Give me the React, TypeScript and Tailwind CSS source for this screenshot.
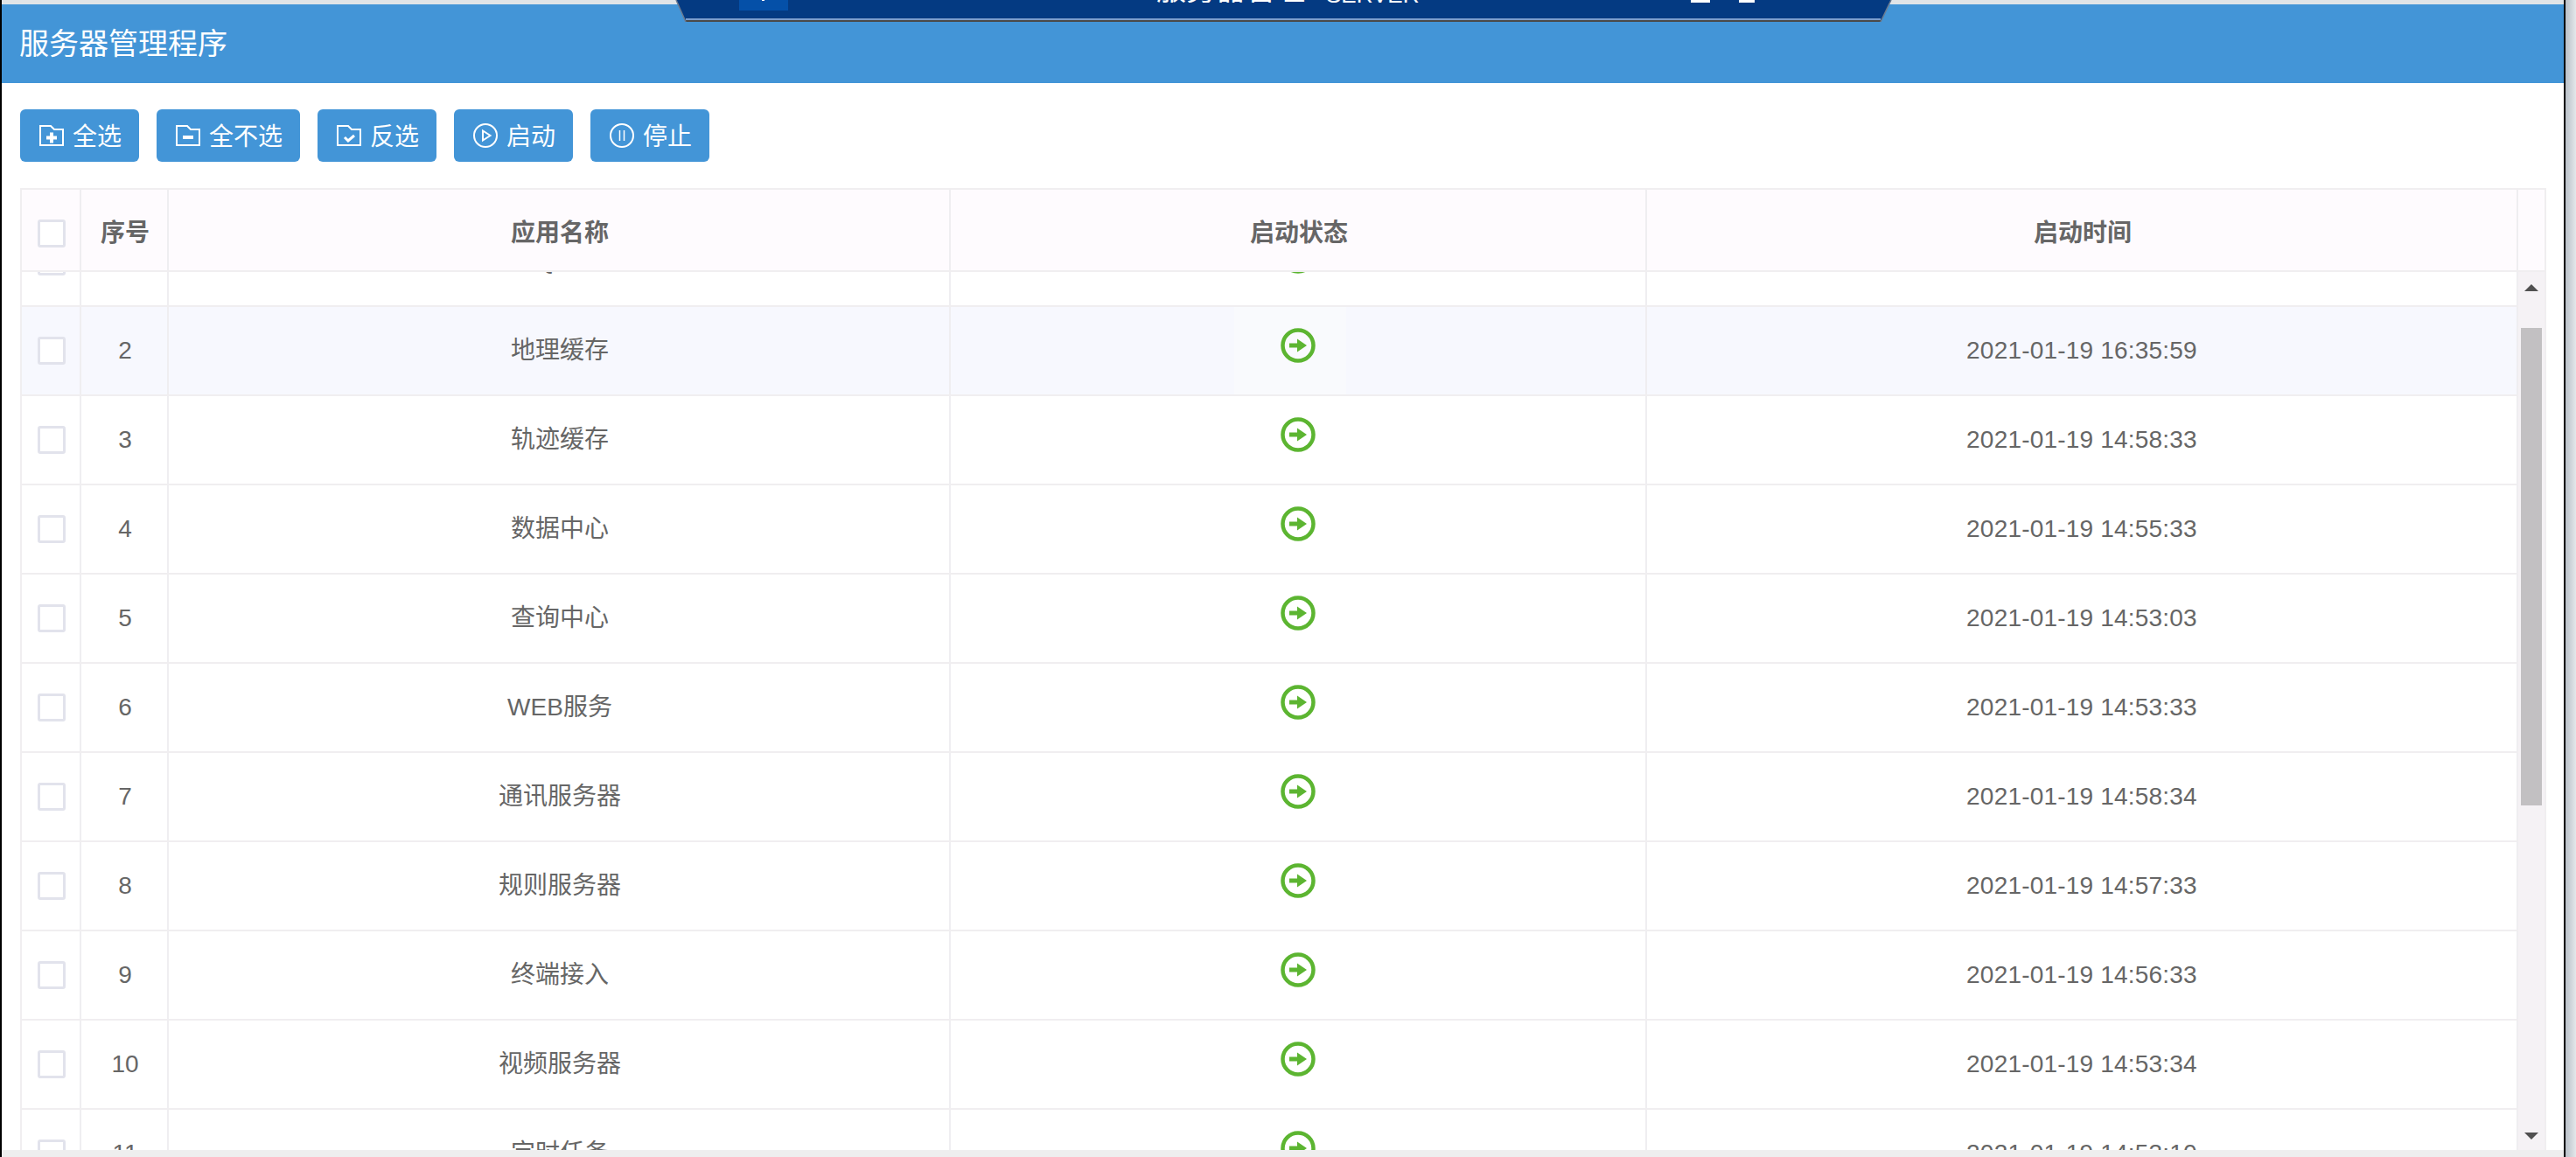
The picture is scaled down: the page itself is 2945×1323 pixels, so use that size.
import React from "react";

const FONT = "font-['Liberation_Sans','Noto_Sans_CJK_SC',sans-serif]";

const rows: [number, string, string][] = [
  [1, "MQ服务", "2021-01-19 14:58:33"],
  [2, "地理缓存", "2021-01-19 16:35:59"],
  [3, "轨迹缓存", "2021-01-19 14:58:33"],
  [4, "数据中心", "2021-01-19 14:55:33"],
  [5, "查询中心", "2021-01-19 14:53:03"],
  [6, "WEB服务", "2021-01-19 14:53:33"],
  [7, "通讯服务器", "2021-01-19 14:58:34"],
  [8, "规则服务器", "2021-01-19 14:57:33"],
  [9, "终端接入", "2021-01-19 14:56:33"],
  [10, "视频服务器", "2021-01-19 14:53:34"],
  [11, "定时任务", "2021-01-19 14:53:10"],
];

function Folder({ kind }: { kind: "plus" | "minus" | "check" }) {
  return (
    <svg width="28" height="24" viewBox="0 0 28 24" fill="none" className="shrink-0">
      <path d="M1 23V1H13L17 5H27V23Z" stroke="white" strokeWidth="2" />
      {kind === "plus" && <path d="M8 14.5H20M14 8.5V20.5" stroke="white" strokeWidth="4" />}
      {kind === "minus" && <path d="M8 14H20" stroke="white" strokeWidth="4" />}
      {kind === "check" && <path d="M9 14L13 18L20 12" stroke="white" strokeWidth="3" />}
    </svg>
  );
}

function Circle({ kind }: { kind: "play" | "pause" }) {
  return (
    <svg width="28" height="28" viewBox="0 0 28 28" fill="none" className="shrink-0">
      <circle cx="14" cy="14" r="13" stroke="white" strokeWidth="2" />
      {kind === "play" && <path d="M11 8.5V19.5L19.5 14Z" stroke="white" strokeWidth="2" />}
      {kind === "pause" && <path d="M11.5 8V20M16.5 8V20" stroke="white" strokeWidth="1.5" />}
    </svg>
  );
}

function Btn({ icon, label, w }: { icon: React.ReactNode; label: string; w: string }) {
  return (
    <button className={`flex h-[60px] items-center justify-start gap-[10px] rounded-md bg-[#4395d7] pl-[22px] text-[28px] leading-none text-white ${w}`}>
      {icon}
      <span className="mt-[3px]">{label}</span>
    </button>
  );
}

function Check() {
  return <span className="ml-[2px] block h-8 w-8 rounded-[3px] border-[3px] border-[#e2e3ec] bg-white" />;
}

function Status() {
  return (
    <svg width="40" height="40" viewBox="0 0 40 40" fill="none" className="mb-3 ml-[18px]">
      <circle cx="20" cy="20" r="17.5" stroke="#5cb531" strokeWidth="4.5" />
      <path d="M10 20H21" stroke="#5cb531" strokeWidth="5" />
      <path d="M19 12.5L30 20L19 27.5Z" fill="#5cb531" />
    </svg>
  );
}

function Row({ n, name, time }: { n: number; name: string; time: string }) {
  const hover = n === 2;
  return (
    <div className={`flex h-[102px] shrink-0 border-b-2 border-[#f0eef0] text-[28px] text-[#666] ${hover ? "bg-[#f7f8fe]" : "bg-white"}`}>
      <div className="flex w-[68px] items-center justify-center border-r-2 border-[#efeef1]">
        <Check />
      </div>
      <div className="flex w-[100px] items-center justify-center border-r-2 border-[#efeef1] pl-[2px]">{n}</div>
      <div className="flex w-[894px] items-center justify-center border-r-2 border-[#efeef1] pl-[2px]">{name}</div>
      <div className="flex w-[796px] items-center justify-center border-r-2 border-[#efeef1]">
        <div className={`mr-[18px] flex h-full w-[128px] items-center justify-center ${hover ? "bg-[#f9fafd]" : ""}`}>
          <Status />
        </div>
      </div>
      <div className="flex w-[996px] items-center justify-center border-r-2 border-[#efeef1] tracking-[0.2px]">{time}</div>
    </div>
  );
}

function Tab() {
  return (
    <div className="absolute left-[770px] top-0 h-[26px] w-[1396px] overflow-hidden">
      <svg width="1396" height="26" viewBox="0 0 1396 26" className="absolute left-0 top-0">
        <polygon points="3,0 1392,0 1380,25 14,25" fill="#043a82" />
        <rect x="14" y="21" width="1366" height="2" fill="#7c9ccb" />
        <rect x="14" y="23" width="1366" height="2" fill="#4a4a4a" />
        <path d="M3 0L14 25M1392 0L1380 25" stroke="#6b7a90" strokeWidth="1.5" />
        <rect x="75" y="0" width="56" height="12" fill="#0550a8" />
        <rect x="101" y="0" width="3" height="1" fill="white" />
        <rect x="1163" y="0" width="22" height="3" fill="white" />
        <rect x="1218" y="0" width="18" height="3" fill="white" />
      </svg>
      <div className="absolute left-[552px] top-0 h-[3px] overflow-hidden">
        <div className="mt-[-27px] whitespace-nowrap text-[34px] leading-[30px] text-white">服务器管理</div>
      </div>
      <div className="absolute left-[746px] top-0 h-[3px] overflow-hidden">
        <div className="mt-[-19px] whitespace-nowrap text-[26px] leading-[26px] text-white">SERVER</div>
      </div>
    </div>
  );
}

export default function App() {
  return (
    <div className={`relative flex h-[1323px] w-[2945px] overflow-hidden bg-white ${FONT}`}>
      <div className="w-[2px] shrink-0 bg-black" />
      <div className="flex w-[2929px] shrink-0 flex-col">
        <div className="h-[5px] shrink-0 bg-[#e0e4e7]" />
        <div className="flex h-[90px] shrink-0 items-center bg-[#4395d7] pl-[20px] text-[34px] text-white">服务器管理程序</div>
        <div className="flex min-h-0 flex-1 flex-col pl-[21px] pr-[20px] pt-[30px]">
          <div className="flex shrink-0 gap-5">
            <Btn w="w-[136px]" icon={<Folder kind="plus" />} label="全选" />
            <Btn w="w-[164px]" icon={<Folder kind="minus" />} label="全不选" />
            <Btn w="w-[136px]" icon={<Folder kind="check" />} label="反选" />
            <Btn w="w-[136px]" icon={<Circle kind="play" />} label="启动" />
            <Btn w="w-[136px]" icon={<Circle kind="pause" />} label="停止" />
          </div>
          <div className="mt-[30px] flex min-h-0 flex-1 flex-col border-l-2 border-r-2 border-t-2 border-[#f0eef0]">
            <div className="flex h-[94px] shrink-0 border-b-2 border-[#f0eef0] bg-[#fefbfe] text-[28px] font-bold text-[#666]">
              <div className="flex w-[68px] items-center justify-center border-r-2 border-[#efeef1] pt-2">
                <Check />
              </div>
              <div className="flex w-[100px] items-center justify-center border-r-2 border-[#efeef1] pl-[2px] pt-2">序号</div>
              <div className="flex w-[894px] items-center justify-center border-r-2 border-[#efeef1] pl-[2px] pt-2">应用名称</div>
              <div className="flex w-[796px] items-center justify-center border-r-2 border-[#efeef1] pl-[2px] pt-2">启动状态</div>
              <div className="flex w-[996px] items-center justify-center border-r-2 border-[#efeef1] pl-[2px] pt-2">启动时间</div>
            </div>
            <div className="flex min-h-0 flex-1">
              <div className="w-[2854px] min-w-0 overflow-hidden">
                <div className="mt-[-62px] flex flex-col">
                  {rows.map(([n, name, time]) => (
                    <Row key={n} n={n} name={name} time={time} />
                  ))}
                </div>
              </div>
              <div className="flex w-[30px] shrink-0 flex-col items-center bg-[#f5f2f5] pt-[14px]">
                <svg width="16" height="8" viewBox="0 0 16 8"><polygon points="8,0 16,8 0,8" fill="#505050" /></svg>
                <div className="mt-[42px] h-[546px] w-6 bg-[#c2c0c2]" />
                <svg width="16" height="8" viewBox="0 0 16 8" className="mt-[374px]"><polygon points="0,0 16,0 8,8" fill="#505050" /></svg>
              </div>
            </div>
          </div>
        </div>
        <div className="h-[8px] shrink-0 bg-[#eeeeee]" />
      </div>
      <div className="w-[2px] shrink-0 bg-black" />
      <div className="w-[12px] shrink-0 bg-gradient-to-r from-[#b9c0c8] to-[#e4e8eb]" />
      <Tab />
    </div>
  );
}
